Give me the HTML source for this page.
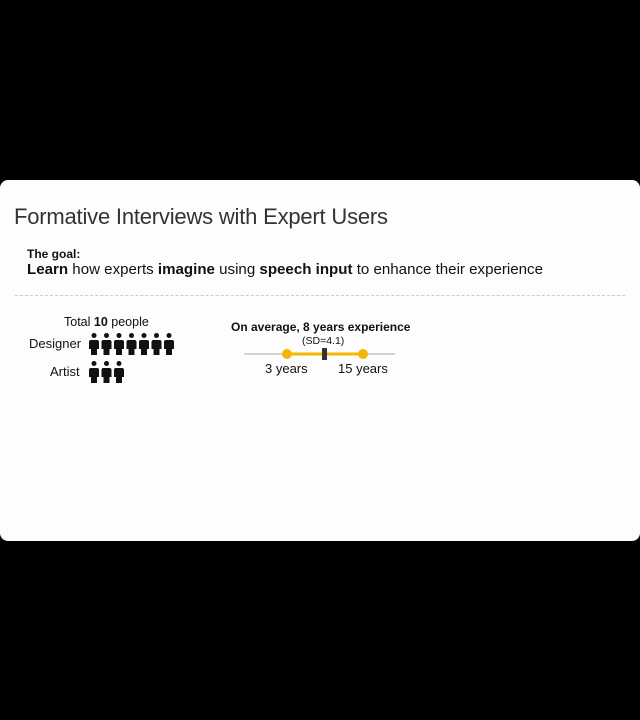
<!DOCTYPE html>
<html><head><style>
body{margin:0;width:640px;height:720px;background:#000;position:relative;font-family:"Liberation Sans",sans-serif;overflow:hidden}
.card{position:absolute;left:0;top:180px;width:640px;height:361px;background:#fdfdfd;border-radius:8px}
.t{position:absolute;white-space:nowrap;color:#111}
</style></head><body>
<div class="card">
<div class="t" style="left:14px;top:24px;font-size:22px;font-weight:300;color:#333;letter-spacing:-0.2px">Formative Interviews with Expert Users</div>
<div class="t" style="left:27px;top:67px;font-size:12px;font-weight:bold">The goal:</div>
<div class="t" style="left:27px;top:81px;font-size:15.1px"><b>Learn</b> how experts <b>imagine</b> using <b>speech input</b> to enhance their experience</div>
<div style="position:absolute;left:15px;top:115px;width:610px;border-top:1px dashed #ccc"></div>
<div class="t" style="left:64px;top:135px;font-size:12.5px">Total <b>10</b> people</div>
<div class="t" style="left:29px;top:156px;font-size:13px">Designer</div>
<div class="t" style="left:50px;top:184px;font-size:13px">Artist</div>
<svg style="position:absolute;left:0;top:0" width="640" height="361">
<defs><g id="p"><circle cx="0" cy="2.5" r="2.5" fill="#111"/><path d="M-3 7h6q2 0 2 2v7h-2v6h-6v-6h-2v-7q0-2 2-2z" fill="#111"/></g></defs>
<g transform="translate(94,153)"><use href="#p"/><use href="#p" x="12.5"/><use href="#p" x="25"/><use href="#p" x="37.5"/><use href="#p" x="50"/><use href="#p" x="62.5"/><use href="#p" x="75"/></g>
<g transform="translate(94,181)"><use href="#p"/><use href="#p" x="12.5"/><use href="#p" x="25"/></g>
<line x1="244" y1="174" x2="395" y2="174" stroke="#aaa" stroke-width="1"/>
<line x1="287" y1="174" x2="363" y2="174" stroke="#f2b705" stroke-width="3"/>
<circle cx="287" cy="174" r="5" fill="#f2b705"/><circle cx="363" cy="174" r="5" fill="#f2b705"/>
<rect x="322" y="168" width="5" height="12" fill="#333"/>
</svg>
<div class="t" style="left:231px;top:140px;font-size:12px;font-weight:bold">On average, 8 years experience</div>
<div class="t" style="left:302px;top:155px;font-size:10.5px">(SD=4.1)</div>
<div class="t" style="left:265px;top:181px;font-size:13px">3 years</div>
<div class="t" style="left:338px;top:181px;font-size:13px">15 years</div>
</div>
</body></html>
